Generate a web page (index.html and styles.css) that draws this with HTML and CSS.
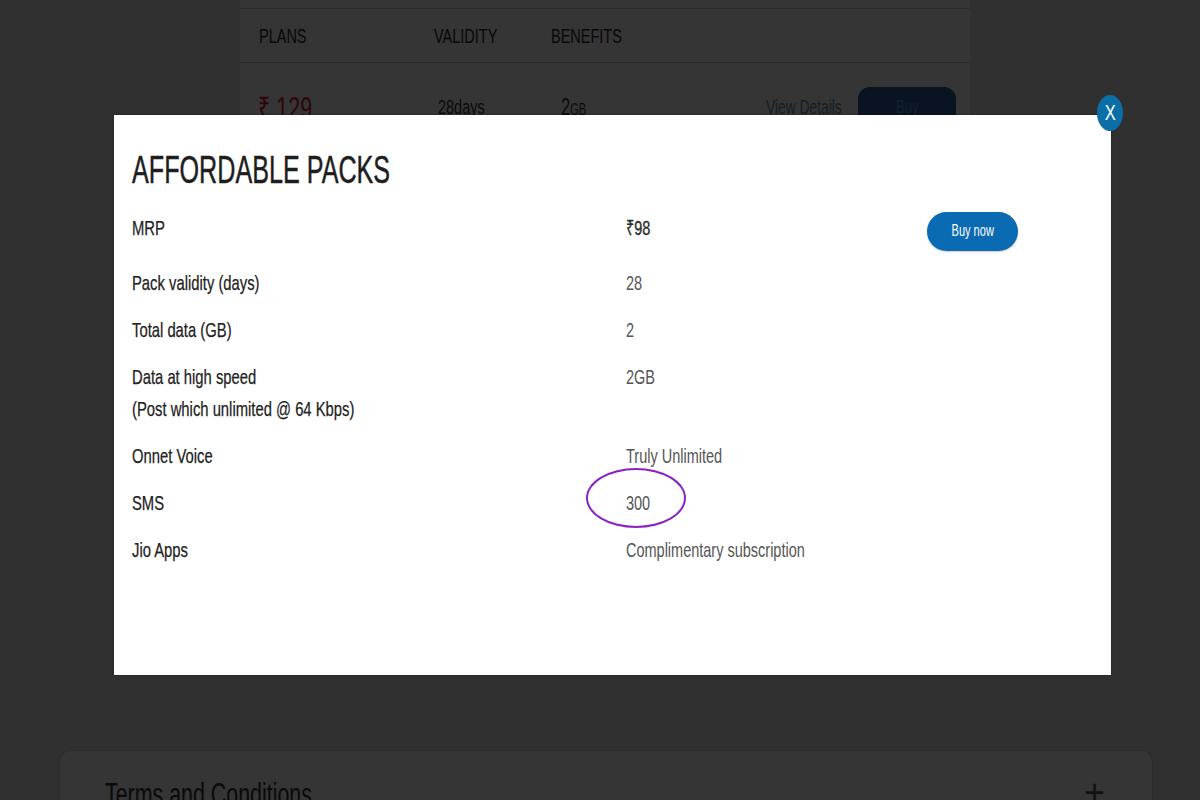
FILE: index.html
```html
<!DOCTYPE html>
<html>
<head>
<meta charset="utf-8">
<link rel="stylesheet" href="styles.css">
</head>
<body>
<div class="page">
  <div class="plans-card">
    <div class="plans-head">
      <div class="c-plan"><span class="sx">PLANS</span></div>
      <div class="c-val"><span class="sx">VALIDITY</span></div>
      <div class="c-ben"><span class="sx">BENEFITS</span></div>
    </div>
    <div class="plans-row">
      <div class="c-plan price"><span class="sx">₹ 129</span></div>
      <div class="c-val days"><span class="sx">28days</span></div>
      <div class="c-ben gb"><span class="sx">2<small>GB</small></span></div>
      <div class="row-actions">
        <span class="view"><span class="sx">View Details</span></span>
        <span class="buy-bg"><span class="sx sxc">Buy</span></span>
      </div>
    </div>
  </div>
  <div class="terms-card">
    <span class="terms"><span class="sx">Terms and Conditions</span></span>
    <span class="plus">+</span>
  </div>
</div>

<div class="overlay">
  <div class="modal">
    <h1 class="title"><span class="sx sxt">AFFORDABLE PACKS</span></h1>
    <div class="specs">
      <div class="lbl first"><span class="sx sxl">MRP</span></div>
      <div class="val first mrp"><span class="sx">₹98</span></div>
      <div class="act first"><button class="buy-now"><span class="sx sxc">Buy now</span></button></div>

      <div class="lbl"><span class="sx sxl">Pack validity (days)</span></div>
      <div class="val"><span class="sx">28</span></div>
      <div></div>

      <div class="lbl"><span class="sx sxl">Total data (GB)</span></div>
      <div class="val"><span class="sx">2</span></div>
      <div></div>

      <div class="lbl"><span class="sx sxl">Data at high speed</span><br><span class="sx sxl">(Post which unlimited @ 64 Kbps)</span></div>
      <div class="val"><span class="sx">2GB</span></div>
      <div></div>

      <div class="lbl"><span class="sx sxl">Onnet Voice</span></div>
      <div class="val"><span class="sx">Truly Unlimited</span></div>
      <div></div>

      <div class="lbl"><span class="sx sxl">SMS</span></div>
      <div class="val"><span class="sx">300</span></div>
      <div></div>

      <div class="lbl"><span class="sx sxl">Jio Apps</span></div>
      <div class="val"><span class="sx">Complimentary subscription</span></div>
      <div></div>
    </div>
    <div class="circle"></div>
  </div>
  <div class="close"><span>X</span></div>
</div>
</body>
</html>
```

FILE: styles.css
```css
html, body {
  margin: 0;
  padding: 0;
}
body {
  width: 1200px;
  height: 800px;
  overflow: hidden;
  background: #303030;
  font-family: "Liberation Sans", Arial, sans-serif;
  position: relative;
}
.sx {
  display: inline-block;
  transform: scaleX(0.69);
  transform-origin: left center;
  white-space: nowrap;
}
.sxc {
  transform-origin: center center;
}
.sxt {
  transform: scaleX(0.645);
}
.sxl {
  transform: scaleX(0.705);
}

/* background page */
.page {
  display: flex;
  flex-direction: column;
  height: 800px;
}
.plans-card {
  margin-left: 240px;
  width: 730px;
  background: #353535;
  padding-top: 8px;
  height: 130px;
}
.plans-head {
  display: flex;
  align-items: center;
  height: 53px;
  border-top: 1px solid #2b2b2b;
  border-bottom: 1px solid #2b2b2b;
  color: #080808;
  font-size: 21px;
}
.c-plan { width: 194px; padding-left: 19px; box-sizing: border-box; flex: none; }
.c-val { width: 117px; flex: none; }
.c-ben { width: 120px; flex: none; }
.plans-row {
  display: flex;
  align-items: center;
  height: 88px;
  font-size: 21px;
  color: #0a0a0a;
}
.price { color: #2f0507; font-size: 31px; padding-left: 18px; }
.days { padding-left: 4px; }
.gb { padding-left: 6px; font-size: 24px; }
.gb small { font-size: 16px; }
.row-actions {
  margin-left: auto;
  display: flex;
  align-items: center;
  gap: 14px;
  padding-right: 14px;
}
.view { color: #141d27; font-size: 20px; width: 78px; }
.buy-bg {
  width: 98px;
  height: 40px;
  border-radius: 12px;
  background: #0a1322;
  color: #132034;
  display: flex;
  align-items: center;
  justify-content: center;
  font-size: 19px;
}
.terms-card {
  margin-top: auto;
  margin-left: 60px;
  width: 1092px;
  height: 49px;
  background: #353535;
  border-radius: 10px 10px 0 0;
  box-shadow: 0 0 2px rgba(0,0,0,0.25);
  display: flex;
  align-items: flex-start;
  justify-content: space-between;
  padding: 27px 45px 0 45px;
  box-sizing: border-box;
  color: #0a0a0a;
}
.terms { font-size: 31px; line-height: 34px; }
.plus { font-size: 36px; line-height: 36px; font-weight: 300; color: #121212; margin-top: -3px; margin-right: 2px; }

/* overlay */
.overlay {
  position: absolute;
  inset: 0;
}
.modal {
  position: absolute;
  left: 114px;
  top: 115px;
  width: 997px;
  height: 560px;
  background: #ffffff;
  box-sizing: border-box;
  padding: 32px 0 0 18px;
  box-shadow: 0 0 2px rgba(0,0,0,0.4);
}
.title {
  margin: 0;
  font-size: 39px;
  line-height: 45px;
  font-weight: normal;
  color: #1e1e1e;
  -webkit-text-stroke: 0.5px #1e1e1e;
}
.specs {
  margin-top: 12px;
  display: grid;
  grid-template-columns: 494px 301px 91px;
  row-gap: 15px;
  font-size: 21px;
  line-height: 32px;
}
.lbl { color: #222222; -webkit-text-stroke: 0.25px #222222; }
.val { color: #555555; }
.first {
  height: 48px;
  display: flex;
  align-items: center;
}
.mrp { color: #2a2a2a; -webkit-text-stroke: 0.35px #2a2a2a; }
.act { align-items: center; }
.buy-now {
  width: 91px;
  height: 39px;
  border: none;
  border-radius: 20px;
  background: #0a6bb3;
  color: #ffffff;
  font-family: "Liberation Sans", Arial, sans-serif;
  font-size: 16px;
  padding: 0;
  margin-top: 6px;
  box-shadow: 0 1px 2px rgba(0,0,0,0.2);
}
.circle {
  position: absolute;
  left: 472px;
  top: 353px;
  width: 100px;
  height: 60px;
  box-sizing: border-box;
  border: 2px solid #8a22c2;
  border-radius: 50%;
}
.close {
  position: absolute;
  left: 1097px;
  top: 95px;
  width: 26px;
  height: 36px;
  border-radius: 50%;
  background: #0b6ea6;
  color: #ffffff;
  display: flex;
  align-items: center;
  justify-content: center;
  font-size: 22px;
}
.close span {
  display: inline-block;
  transform: scaleX(0.75);
}
```
